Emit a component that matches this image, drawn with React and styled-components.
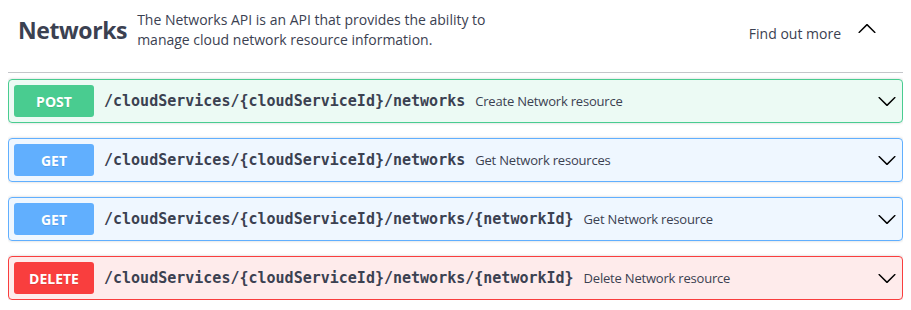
import React from 'react'
import styled, { createGlobalStyle } from 'styled-components'

const GlobalStyle = createGlobalStyle`
  body {
    margin: 8px;
    background: #fff;
    font-family: "Open Sans", "Noto Sans", sans-serif;
    color: #3b4151;
  }
`

const methods = {
  post: { color: '#49cc90', bg: 'rgba(73, 204, 144, 0.1)' },
  get: { color: '#61affe', bg: 'rgba(97, 175, 254, 0.1)' },
  delete: { color: '#f93e3e', bg: 'rgba(249, 62, 62, 0.1)' },
}

const operations = [
  { method: 'post', path: '/cloudServices/{cloudServiceId}/networks', summary: 'Create Network resource' },
  { method: 'get', path: '/cloudServices/{cloudServiceId}/networks', summary: 'Get Network resources' },
  { method: 'get', path: '/cloudServices/{cloudServiceId}/networks/{networkId}', summary: 'Get Network resource' },
  { method: 'delete', path: '/cloudServices/{cloudServiceId}/networks/{networkId}', summary: 'Delete Network resource' },
]

function ArrowDown() {
  return (
    <svg width="20" height="20" viewBox="0 0 20 20">
      <path d="M17.418 6.109c.272-.268.709-.268.979 0s.271.701 0 .969l-7.908 7.83c-.27.268-.707.268-.979 0l-7.908-7.83c-.27-.268-.27-.701 0-.969.271-.268.709-.268.979 0L10 13.25l7.418-7.141z" fill="#000" />
    </svg>
  )
}

function ArrowUp() {
  return (
    <svg width="20" height="20" viewBox="0 0 20 20">
      <path d="M17.418 14.908c.272.268.709.268.979 0s.271-.701 0-.969l-7.908-7.83c-.27-.268-.707-.268-.979 0l-7.908 7.83c-.27.268-.27.701 0 .969.271.268.709.268.979 0L10 7.767l7.418 7.141z" fill="#000" />
    </svg>
  )
}

export default function App() {
  return (
    <>
      <GlobalStyle />
      <Section>
        <TagHeader>
          <TagName>Networks</TagName>
          <TagDescription>
            The Networks API is an API that provides the ability to<br />
            manage cloud network resource information.
          </TagDescription>
          <FindOut>Find out more</FindOut>
          <ExpandButton><ArrowUp /></ExpandButton>
        </TagHeader>
        <OpList>
          {operations.map((op, i) => (
            <Opblock key={i} method={op.method}>
              <Method method={op.method}>{op.method.toUpperCase()}</Method>
              <Path>{op.path}</Path>
              <Summary>{op.summary}</Summary>
              <Chevron><ArrowDown /></Chevron>
            </Opblock>
          ))}
        </OpList>
      </Section>
    </>
  )
}

const Section = styled.div`
  display: flex;
  flex-direction: column;
`

const TagHeader = styled.div`
  display: flex;
  align-items: center;
  padding: 2px 26px 22px 10px;
  border-bottom: 1px solid rgba(59, 65, 81, 0.3);
  margin-bottom: 6px;
`

const TagName = styled.span`
  font-size: 23px;
  font-weight: 700;
  letter-spacing: -0.4px;
  color: #3b4151;
  line-height: 40px;
`

const TagDescription = styled.div`
  flex: 1;
  padding: 0 10px;
  font-size: 14px;
  line-height: 20px;
  color: #3b4151;
`

const FindOut = styled.span`
  font-size: 14px;
  color: #3b4151;
  margin-top: 6px;
`

const ExpandButton = styled.div`
  display: flex;
  margin-left: 16px;
  margin-top: -4px;
`

const OpList = styled.div`
  display: flex;
  flex-direction: column;
  gap: 15px;
`

const Opblock = styled.div`
  display: flex;
  align-items: center;
  padding: 5px;
  border: 1px solid ${p => methods[p.method].color};
  background: ${p => methods[p.method].bg};
  border-radius: 4px;
  box-shadow: 0 0 3px rgba(0, 0, 0, 0.19);
`

const Method = styled.span`
  min-width: 80px;
  height: 32px;
  display: flex;
  align-items: center;
  justify-content: center;
  border-radius: 3px;
  background: ${p => methods[p.method].color};
  color: #fff;
  font-size: 14px;
  font-weight: 700;
  text-shadow: 0 1px 0 rgba(0, 0, 0, 0.1);
`

const Path = styled.span`
  padding: 0 10px;
  font-family: "DejaVu Sans Mono", "Liberation Mono", monospace;
  font-size: 15px;
  font-weight: 600;
  color: #3b4151;
`

const Summary = styled.span`
  flex: 1;
  font-size: 13px;
  letter-spacing: -0.2px;
  color: #3b4151;
`

const Chevron = styled.span`
  display: flex;
`
